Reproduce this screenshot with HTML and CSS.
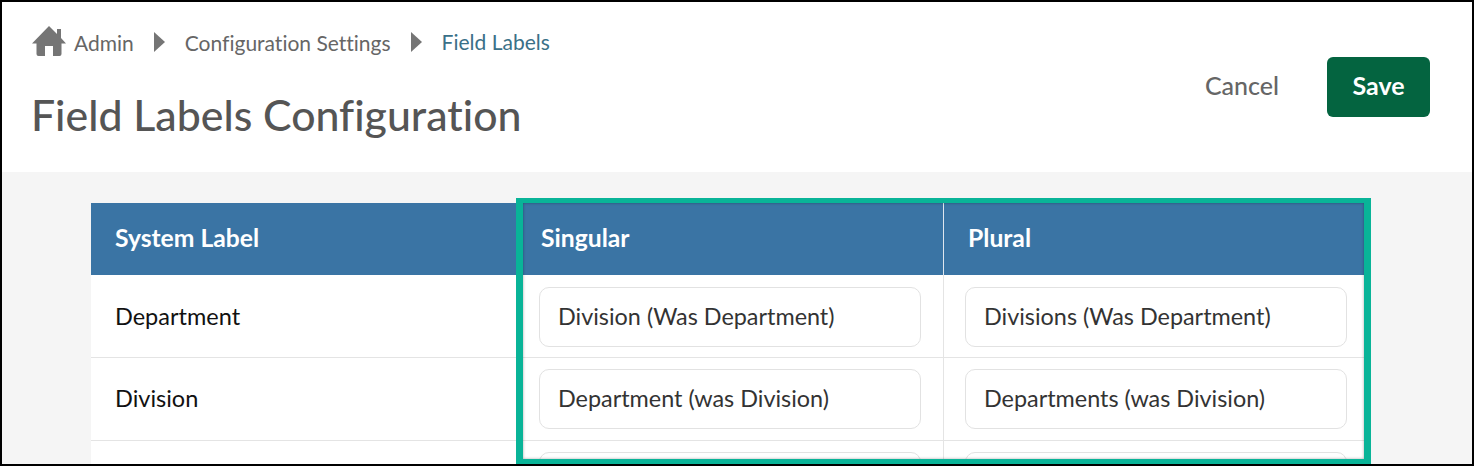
FILE: index.html
```html
<!DOCTYPE html>
<html lang="en">

<head>
    <meta charset="UTF-8">
    <meta name="viewport" content="width=device-width, initial-scale=1.0">
    <title>Field Labels Configuration</title>
    <link rel="stylesheet" href="styles.css">
</head>

<body>
    <div class="frame">
        <header class="page-header">
            <div class="page-title">
                <nav class="breadcrumb">
                    <svg class="home-icon" viewBox="0 0 34 30" aria-hidden="true">
                        <path d="M17 0 L25 8 V3 H29 V12 L34 17.500 H29.500 V28 Q29.500 30 27.500 30 H21 V20 H13 V30 H6.500 Q4.500 30 4.500 28 V17.500 H0 Z" />
                    </svg>
                    <a href="#" class="crumb crumb-home">Admin</a>
                    <span class="crumb-arrow"></span>
                    <a href="#" class="crumb">Configuration Settings</a>
                    <span class="crumb-arrow"></span>
                    <a href="#" class="crumb crumb-current">Field Labels</a>
                </nav>
                <h1>Field Labels Configuration</h1>
            </div>
            <div class="page-actions">
                <button class="btn-cancel">Cancel</button>
                <button class="btn-save">Save</button>
            </div>
        </header>

        <main class="page-body">
            <div class="labels-table">
                <div class="head-cell">System Label</div>
                <div class="head-cell">Singular</div>
                <div class="head-cell">Plural</div>

                <div class="cell">Department</div>
                <div class="cell"><input class="label-input" type="text" value="Division (Was Department)"></div>
                <div class="cell"><input class="label-input" type="text" value="Divisions (Was Department)"></div>

                <div class="cell">Division</div>
                <div class="cell"><input class="label-input" type="text" value="Department (was Division)"></div>
                <div class="cell"><input class="label-input" type="text" value="Departments (was Division)"></div>

                <div class="cell"></div>
                <div class="cell"><input class="label-input" type="text"></div>
                <div class="cell"><input class="label-input" type="text"></div>
            </div>
        </main>

        <div class="highlight"></div>
    </div>
</body>

</html>
```

FILE: styles.css
```css
body {
    margin: 0;
    font-family: 'Lato', 'Open Sans', sans-serif;
    font-variant-ligatures: none;
    color: #222;
}

.frame {
    position: relative;
    box-sizing: border-box;
    height: 466px;
    border: 2px solid #000;
    overflow: hidden;
    background-color: #f5f5f5;
}

.page-header {
    display: flex;
    justify-content: space-between;
    height: 170px;
    padding: 0 42px 0 30px;
    background-color: white;
}

.breadcrumb {
    display: flex;
    align-items: center;
    height: 30px;
    margin-top: 24px;
}

.home-icon {
    width: 34px;
    height: 30px;
    fill: #757575;
}

.crumb {
    margin-top: 2px;
    font-size: 21px;
    color: #666;
    text-decoration: none;
}

.crumb-home {
    margin-left: 8px;
}

.crumb-current {
    margin-top: 1px;
    color: #3a7088;
}

.crumb-arrow {
    width: 0;
    height: 0;
    margin: 2px 20px 0;
    border-left: 11px solid #757575;
    border-top: 10px solid transparent;
    border-bottom: 10px solid transparent;
}

h1 {
    margin: 35px 0 0 -1px;
    font-size: 42.8px;
    line-height: 48px;
    font-weight: 500;
    color: #555;
}

.page-actions {
    display: flex;
    align-items: center;
    gap: 48px;
    height: 60px;
    margin-top: 55px;
}

.btn-cancel {
    border: none;
    padding: 0 0 5px;
    background: none;
    font-family: inherit;
    font-size: 25px;
    font-weight: 500;
    color: #666;
    cursor: pointer;
}

.btn-save {
    width: 103px;
    height: 60px;
    padding: 0 0 5px;
    border: none;
    border-radius: 6px;
    background-color: #046440;
    font-family: inherit;
    font-size: 25px;
    font-weight: 700;
    color: white;
    cursor: pointer;
}

.page-body {
    padding: 31px 0 0 89px;
}

.labels-table {
    display: grid;
    grid-template-columns: repeat(3, 426px);
    grid-template-rows: 72px 83px;
    grid-auto-rows: 82.5px;
    width: fit-content;
    background-color: white;
    font-size: 23.5px;
}

.head-cell {
    box-sizing: border-box;
    display: flex;
    align-items: center;
    padding: 0 0 3px 24px;
    background-color: #3a74a4;
    font-size: 24.7px;
    font-weight: 700;
    color: white;
}

.head-cell:nth-child(3) {
    border-left: 1px solid #dfe6ee;
}

.cell {
    box-sizing: border-box;
    display: flex;
    align-items: center;
    padding: 1px 22px 0;
    border-bottom: 1px solid #e4e4e4;
    color: #111;
}

.cell:nth-child(3n) {
    padding-left: 21px;
    border-left: 1px solid #e4e4e4;
}

.cell:nth-child(3n + 1) {
    padding: 0 0 1px 24px;
}

.label-input {
    box-sizing: border-box;
    width: 100%;
    height: 60px;
    padding: 0 18px 2px;
    border: 1px solid #e2e2e2;
    border-radius: 10px;
    background-color: white;
    font-family: inherit;
    font-size: 23.4px;
    color: #333;
}

.highlight {
    position: absolute;
    top: 196px;
    left: 514px;
    width: 855px;
    height: 266px;
    box-sizing: border-box;
    border-style: solid;
    border-color: #09b498;
    border-width: 5px 7px 5px 7px;
    box-shadow: inset 0 0 3px rgba(0, 0, 0, 0.35);
    pointer-events: none;
}
```
